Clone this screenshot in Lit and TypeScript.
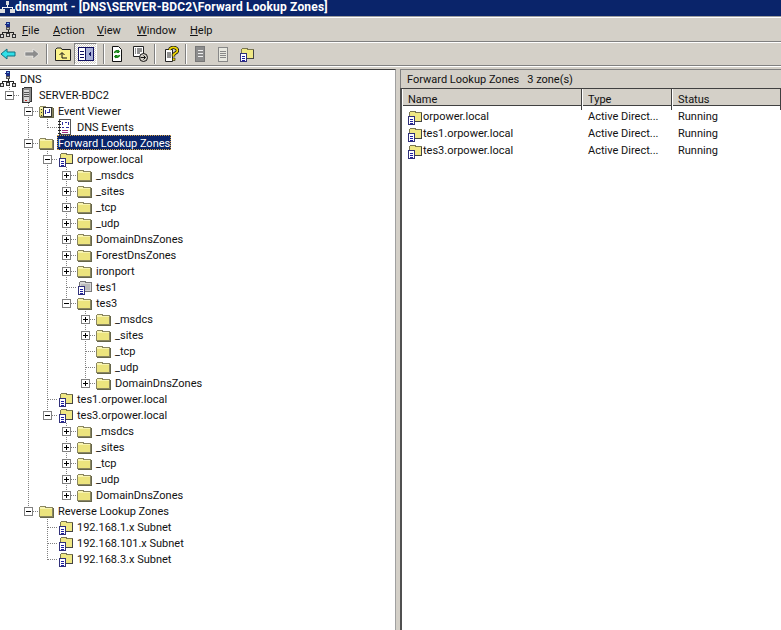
import { LitElement, html, css, svg } from "lit";
import { customElement } from "lit/decorators.js";

type IconName = "net" | "server" | "viewer" | "log" | "folder" | "zone" | "deleg";

interface TreeNode {
  label: string;
  icon: IconName;
  open?: boolean;
  selected?: boolean;
  children?: TreeNode[];
}

const folders = (names: string[]): TreeNode[] => names.map((label) => ({ label, icon: "folder", children: [{ label: "", icon: "folder" }] }));
const plain = (label: string): TreeNode => ({ label, icon: "folder" });

const tree: TreeNode = {
  label: "DNS",
  icon: "net",
  open: true,
  children: [
    {
      label: "SERVER-BDC2",
      icon: "server",
      open: true,
      children: [
        {
          label: "Event Viewer",
          icon: "viewer",
          open: true,
          children: [{ label: "DNS Events", icon: "log" }],
        },
        {
          label: "Forward Lookup Zones",
          icon: "folder",
          open: true,
          selected: true,
          children: [
            {
              label: "orpower.local",
              icon: "zone",
              open: true,
              children: [
                ...folders(["_msdcs", "_sites", "_tcp", "_udp", "DomainDnsZones", "ForestDnsZones", "ironport"]),
                { label: "tes1", icon: "deleg" },
                {
                  label: "tes3",
                  icon: "folder",
                  open: true,
                  children: [...folders(["_msdcs", "_sites"]), plain("_tcp"), plain("_udp"), ...folders(["DomainDnsZones"])],
                },
              ],
            },
            { label: "tes1.orpower.local", icon: "zone" },
            {
              label: "tes3.orpower.local",
              icon: "zone",
              open: true,
              children: folders(["_msdcs", "_sites", "_tcp", "_udp", "DomainDnsZones"]),
            },
          ],
        },
        {
          label: "Reverse Lookup Zones",
          icon: "folder",
          open: true,
          children: [
            { label: "192.168.1.x Subnet", icon: "zone" },
            { label: "192.168.101.x Subnet", icon: "zone" },
            { label: "192.168.3.x Subnet", icon: "zone" },
          ],
        },
      ],
    },
  ],
};

const zones = ["orpower.local", "tes1.orpower.local", "tes3.orpower.local"];

const folderShape = svg`
  <path d="M1.500 13.500V4.500L3 3h4l1 1.500h6.500v9z" fill="#f8f4b0" stroke="#8a8660"/>
  <path d="M2 6h12v7H2z" fill="#ece47e"/>
  <path d="M15.500 5v10M2 14.500h13" stroke="#66664a"/>`;

const docShape = svg`
  <path d="M2.500 7.500h6v8h-6z" fill="#fff" stroke="#30307a"/>
  <path d="M4 10h3M4 12h3M4 14h3" stroke="#2020a0"/>`;

const icons: Record<IconName, unknown> = {
  net: svg`
    <circle cx="8" cy="2.500" r="2.500" fill="#1c2c84"/><path d="M7 1.500h2" stroke="#6ab8e8"/>
    <path d="M6.500 5.500h3v2h-3z" fill="#c8c8c8" stroke="#555"/>
    <path d="M8 8v2M2.500 12v-2h11v2" stroke="#222" fill="none"/>
    <path d="M.5 12.500h3v3h-3zM12.500 12.500h3v3h-3zM6.500 11.500h3v3h-3z" fill="#d8d8d8" stroke="#333"/>`,
  server: svg`
    <path d="M3.500 1.500L6 .5h6v14l-2.500 1h-6z" fill="#8c8c8c" stroke="#333"/>
    <path d="M4.500 2.500h5v12h-5z" fill="#d8d8d8"/>
    <path d="M4.500 5h5M4.500 7h5M4.500 9h5" stroke="#555"/>
    <path d="M6 13h2" stroke="#c02020"/>`,
  viewer: svg`
    ${folderShape}
    <path d="M5.500 4.500h8v9h-8z" fill="#fff" stroke="#333"/>
    <path d="M7 7v4M9 9h3M11 6v4" stroke="#3030a0"/>
    <path d="M2.500 6h4M2.500 9h4M2.500 12h4" stroke="#333" stroke-dasharray="1 1"/>`,
  log: svg`
    <path d="M2.500 .5h11v15h-11z" fill="#fff" stroke="#555"/>
    <path d="M5 3v3M8 3h2M11 3v3M5 8h2M9 8h3" stroke="#3030a0"/>
    <path d="M5 11h6M5 13h6" stroke="#a03080"/>
    <path d="M1 2h3M1 5h3M1 8h3M1 11h3M1 14h3" stroke="#222"/>`,
  folder: svg`${folderShape}`,
  zone: svg`
    <path d="M3.500 12V3.500L5 2h4l1 1.500h5.500V12z" fill="#f0e884" stroke="#7a7650"/>
    <path d="M15.500 4v8.500H9" stroke="#444" fill="none"/>
    ${docShape}`,
  deleg: svg`
    <path d="M3.500 12V3.500L5 2h4l1 1.500h5.500V12z" fill="#d8d8d8" stroke="#777"/>
    <path d="M5 5h9v6H5z" fill="#bbb"/>
    ${docShape}`,
};

@customElement("app-root")
export class AppRoot extends LitElement {
  static styles = css`
    :host {
      display: block;
      width: 781px;
      height: 630px;
      overflow: hidden;
      background: #d4d0c8;
      font-family: Roboto, "Liberation Sans", sans-serif;
      font-size: 11px;
      color: #111;
    }
    .window {
      display: flex;
      flex-direction: column;
      height: 630px;
    }
    .title {
      height: 16px;
      flex: none;
      background: #0a246a;
      color: #fff;
      font-weight: 700;
      font-size: 12px;
      letter-spacing: 0.17px;
      line-height: 15px;
      display: flex;
      align-items: flex-start;
      white-space: nowrap;
      overflow: hidden;
    }
    .title svg { flex: none; }
    .menu {
      height: 26px;
      flex: none;
      display: flex;
      align-items: center;
      border-top: 1px solid #a0a0a0;
      border-bottom: 1px solid #808080;
      box-sizing: border-box;
      padding-top: 2px;
      background: linear-gradient(#fff, #fff) 0 0 / 100% 1px no-repeat;
    }
    .menu .items {
      display: grid;
      grid-template-columns: 31px 44px 40px 53px auto;
      margin-left: 3px;
    }
    u { text-decoration-thickness: 1px; }
    .toolbar {
      height: 24px;
      flex: none;
      display: flex;
      align-items: center;
      border-top: 1px solid #fff;
      border-bottom: 1px solid #808080;
      box-sizing: border-box;
    }
    .btn {
      width: 23px;
      height: 22px;
      display: flex;
      align-items: center;
      justify-content: center;
      box-sizing: border-box;
    }
    .btn.first {
      width: 16px;
      margin-right: 4px;
    }
    .btn.on {
      border: 1px solid;
      border-color: #808080 #fff #fff #808080;
      background: repeating-conic-gradient(#fff 0 25%, #d4d0c8 0 50%) 0 0 / 2px 2px;
    }
    .sep {
      width: 2px;
      height: 20px;
      margin: 0 3px;
      border-left: 1px solid #808080;
      border-right: 1px solid #fff;
      box-sizing: border-box;
    }
    .sep.wide { margin: 0 0 0 6px; }
    .sep.tight { margin: 0 1px 0 3px; }
    .panes {
      flex: 1;
      display: flex;
      min-height: 0;
      border-top: 1px solid #fff;
      padding-top: 2px;
    }
    .left {
      width: 396px;
      flex: none;
      box-sizing: border-box;
      background: #fff;
      border-top: 1px solid #404040;
      border-right: 1px solid #a0a0a0;
      padding-top: 1px;
      overflow: hidden;
    }
    .right {
      flex: 1;
      margin-left: 4px;
      display: flex;
      flex-direction: column;
      min-width: 0;
    }
    .row {
      height: 16px;
      display: flex;
      align-items: stretch;
    }
    .cell {
      width: 19px;
      height: 16px;
      flex: none;
      display: flex;
      align-items: center;
      justify-content: center;
      background-repeat: no-repeat;
    }
    .cell.v {
      background-image: repeating-linear-gradient(180deg, #808080 0 1px, #fff 1px 2px);
      background-size: 1px 16px;
      background-position: 9px 0;
    }
    .cell.t {
      background-image: repeating-linear-gradient(180deg, #808080 0 1px, #fff 1px 2px),
        repeating-linear-gradient(90deg, #808080 0 1px, #fff 1px 2px);
      background-size: 1px 16px, 9px 1px;
      background-position: 9px 0, 10px 8px;
    }
    .cell.l {
      background-image: repeating-linear-gradient(180deg, #808080 0 1px, #fff 1px 2px),
        repeating-linear-gradient(90deg, #808080 0 1px, #fff 1px 2px);
      background-size: 1px 9px, 9px 1px;
      background-position: 9px 0, 10px 8px;
    }
    .icon {
      width: 16px;
      height: 16px;
      flex: none;
      margin-right: 3px;
    }
    .label {
      line-height: 18px;
      height: 15px;
      padding: 0 1px;
      white-space: nowrap;
    }
    .label.sel {
      background: #0a246a;
      color: #fff;
      outline: 1px dotted #d4a040;
      outline-offset: -1px;
    }
    .zone-head {
      height: 19px;
      flex: none;
      display: flex;
      align-items: center;
      padding-left: 6px;
      gap: 8px;
      border-top: 1px solid #808080;
      border-left: 1px solid #808080;
      box-sizing: border-box;
    }
    .list {
      flex: 1;
      background: #fff;
      border-left: 2px solid #505050;
      border-top: 1px solid #404040;
      min-height: 0;
    }
    .cols {
      display: grid;
      grid-template-columns: 180px 90px 1fr;
      height: 17px;
      box-sizing: border-box;
      background: #d4d0c8;
      border-bottom: 1px solid #404040;
    }
    .col {
      padding-left: 5px;
      line-height: 21px;
      border-left: 1px solid #fff;
      border-right: 1px solid #404040;
      box-sizing: border-box;
    }
    .line {
      display: grid;
      grid-template-columns: 180px 90px 1fr;
      height: 17px;
      align-items: center;
    }
    .line .name { display: flex; align-items: center; padding-left: 4px; }
    .line .name .icon { margin-right: 1px; }
    .line .type, .line .status { padding-left: 6px; }
    .rows { padding-top: 2px; }
  `;

  icon(name: IconName) {
    return html`<svg class="icon" viewBox="0 0 16 16" shape-rendering="crispEdges">${icons[name]}</svg>`;
  }

  expander(open: boolean) {
    return html`<svg width="9" height="9" viewBox="0 0 9 9" shape-rendering="crispEdges">
      <rect x=".5" y=".5" width="8" height="8" fill="#fff" stroke="#808080"></rect>
      <path d="M2 4.500h5" stroke="#000"></path>
      ${open ? "" : svg`<path d="M4.500 2v5" stroke="#000"></path>`}
    </svg>`;
  }

  // one row per visible node; guides says for each ancestor whether its line carries on
  renderNode(node: TreeNode, guides: boolean[], last: boolean, root = false): unknown {
    const kids = node.children ?? [];
    const expanded = node.open ? kids : [];
    const hasKids = kids.length > 0;
    return html`
      <div class="row">
        ${guides.map((g) => html`<div class="cell ${g ? "v" : ""}"></div>`)}
        ${root
          ? ""
          : html`<div class="cell ${last ? "l" : "t"}">${hasKids ? this.expander(!!node.open) : ""}</div>`}
        ${this.icon(node.icon)}
        <div class="label ${node.selected ? "sel" : ""}">${node.label}</div>
      </div>
      ${expanded.map((k, i) =>
        this.renderNode(k, root ? [] : [...guides, !last], i === expanded.length - 1)
      )}
    `;
  }

  render() {
    const cols = ["Name", "Type", "Status"];
    return html`
      <div class="window">
        <div class="title">
          <svg width="15" height="14" viewBox="0 0 16 15" shape-rendering="crispEdges">
            <path d="M6 1h4v4H6z" fill="#ddd"/><path d="M8 5v3M2.500 10V8h11v2" stroke="#fff" fill="none"/>
            <path d="M0 10h5v4H0zM11 10h5v4h-5z" fill="#ddd"/>
          </svg>
          dnsmgmt - [DNS\\SERVER-BDC2\\Forward Lookup Zones]
        </div>
        <div class="menu">
          ${this.icon("net")}
          <div class="items">
            <span><u>F</u>ile</span>
            <span><u>A</u>ction</span>
            <span><u>V</u>iew</span>
            <span><u>W</u>indow</span>
            <span><u>H</u>elp</span>
          </div>
        </div>
        <div class="toolbar">
          <div class="btn first"><svg width="16" height="16" viewBox="0 0 16 16"><path d="M1 8l6-5v3h8v4H7v3z" fill="#30e0e8" stroke="#107080"/></svg></div>
          <div class="btn"><svg width="16" height="16" viewBox="0 0 16 16"><path d="M15 8L9 3v3H1v4h8v3z" fill="#8c8c8c" stroke="#fff" stroke-width=".5"/></svg></div>
          <div class="sep"></div>
          <div class="btn"><svg width="16" height="16" viewBox="0 0 16 16"><path d="M.5 14.500v-11L2 2h4l1 1.500h8.500v11z" fill="#fbf38c" stroke="#222"/><path d="M7 12V7M4.500 9L7 6.500 9.500 9M7 12h5" stroke="#111" fill="none"/></svg></div>
          <div class="btn on"><svg width="16" height="14" viewBox="0 0 16 14" shape-rendering="crispEdges"><rect x=".5" y=".5" width="15" height="13" fill="#a8b0d8" stroke="#101060"/><path d="M1 1h6v12H1z" fill="#fff"/><path d="M2 4h4M2 7h4M2 10h4" stroke="#101060"/><path d="M7.500 1v12" stroke="#101060"/><path d="M13 4v6l-3-3z" fill="#101060"/></svg></div>
          <div class="sep wide"></div>
          <div class="btn"><svg width="16" height="16" viewBox="0 0 16 16"><path d="M3.500 .5h6l3 3v12h-9z" fill="#fff" stroke="#111"/><path d="M5.500 7a2.800 2.800 0 0 1 5-1M10.500 9a2.800 2.800 0 0 1-5 1" stroke="#108010" stroke-width="1.600" fill="none"/><path d="M10 3.500v3.500H7zM6 12.500V9h3z" fill="#108010"/></svg></div>
          <div class="btn"><svg width="16" height="16" viewBox="0 0 16 16"><path d="M1.500 .5h10v10h-10z" fill="#fff" stroke="#222"/><path d="M3 3h1M5 3h5M3 5h1M5 5h5M3 7h1M5 7h3" stroke="#222"/><circle cx="11.500" cy="11.500" r="4" fill="#d4d0c8" stroke="#111"/><path d="M8.500 11.500h5M11.500 9.500l2 2-2 2" stroke="#111" fill="none"/></svg></div>
          <div class="sep"></div>
          <div class="btn"><svg width="16" height="16" viewBox="0 0 16 16"><path d="M2.500 3.500h7v12h-7z" fill="#fff" stroke="#222"/><path d="M4 7h4M4 9h4M4 11h4" stroke="#222"/><path d="M6.500 4a4 3 0 1 1 6 3l-2 1.500v2" stroke="#111" stroke-width="3.400" fill="none"/><path d="M6.500 4a4 3 0 1 1 6 3l-2 1.500v2" stroke="#f0d800" stroke-width="1.800" fill="none"/><path d="M9.500 12h2.500v2.500H9.500z" fill="#f0d800" stroke="#111" stroke-width=".6"/></svg></div>
          <div class="sep tight"></div>
          <div class="btn"><svg width="16" height="16" viewBox="0 0 16 16" shape-rendering="crispEdges"><path d="M3.500 .5h9v15h-9z" fill="#8c8c8c" stroke="#777"/><path d="M6 4h5M6 7h5M6 10h5" stroke="#eee"/></svg></div>
          <div class="btn"><svg width="16" height="16" viewBox="0 0 16 16" shape-rendering="crispEdges"><path d="M3.500 1.500h9v14h-9z" fill="#e8e8e0" stroke="#888"/><path d="M5 5h6M5 7h6M5 9h6M5 11h6M4 1h8" stroke="#888"/></svg></div>
          <div class="btn"><svg width="16" height="16" viewBox="0 0 16 16" shape-rendering="crispEdges">${icons.zone}</svg></div>
        </div>
        <div class="panes">
          <div class="left">${this.renderNode(tree, [], true, true)}</div>
          <div class="right">
            <div class="zone-head"><span>Forward Lookup Zones</span><span>3 zone(s)</span></div>
            <div class="list">
              <div class="cols">${cols.map((c) => html`<div class="col">${c}</div>`)}</div>
              <div class="rows">
                ${zones.map(
                  (z) => html`<div class="line">
                    <div class="name">${this.icon("zone")}<span>${z}</span></div>
                    <div class="type">Active Direct...</div>
                    <div class="status">Running</div>
                  </div>`
                )}
              </div>
            </div>
          </div>
        </div>
      </div>
    `;
  }
}
